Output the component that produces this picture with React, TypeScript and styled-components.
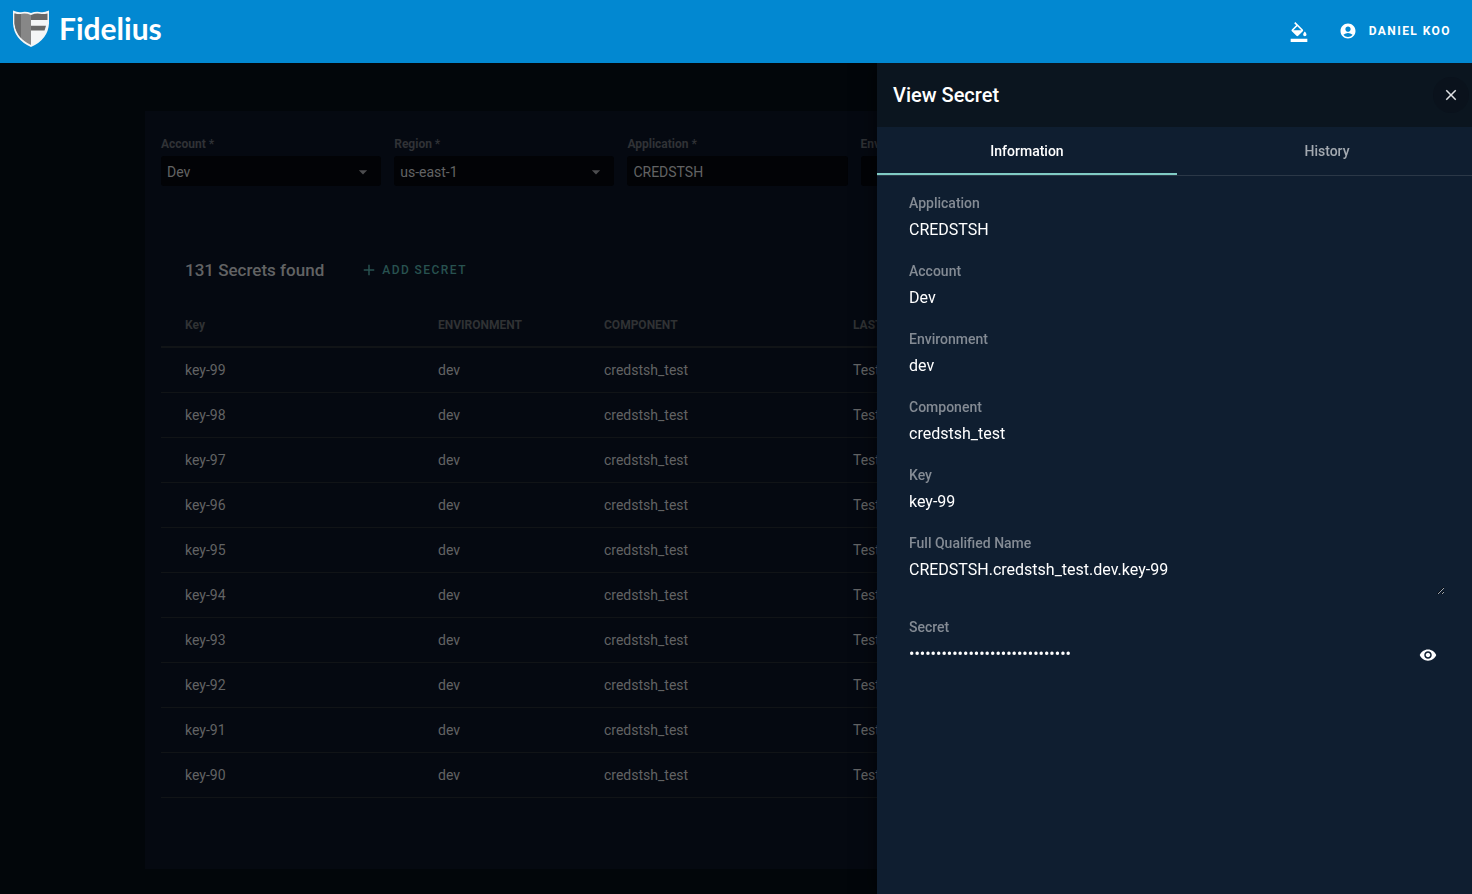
import React from "react";
import styled, { createGlobalStyle } from "styled-components";
import {
  MdAccountCircle,
  MdAdd,
  MdArrowDropDown,
  MdClose,
  MdFormatColorFill,
  MdVisibility,
} from "react-icons/md";

const GlobalStyle = createGlobalStyle`
  * { box-sizing: border-box; }
  body {
    margin: 0;
    background: #02060a;
    color: #626364;
    font-family: Roboto, "Liberation Sans", sans-serif;
    font-size: 14px;
    overflow: hidden;
  }
  button, input, select, textarea { font: inherit; color: inherit; border: 0; padding: 0; margin: 0; background: none; outline: 0; }
  button { cursor: pointer; }
`;

const TopBar = styled.header`
  position: relative;
  z-index: 2;
  display: flex;
  align-items: center;
  justify-content: space-between;
  height: 63px;
  padding: 0 21px 0 12px;
  background: #0288d1;
  color: #fff;
`;

const Brand = styled.a`
  display: flex;
  align-items: center;
  gap: 9px;
  height: 56px;
  align-self: flex-start;
  color: inherit;
  text-decoration: none;
  font: 700 30px/36px Lato, sans-serif;
`;

const TopActions = styled.div`
  display: flex;
  align-items: center;
  gap: 30px;
`;

const ThemeButton = styled.button`
  display: flex;
  font-size: 20px;
`;

const UserButton = styled.button`
  display: flex;
  align-items: center;
  gap: 12px;
  padding-bottom: 2px;
  font-size: 12px;
  font-weight: 700;
  line-height: 20px;
  letter-spacing: 0.12em;
  text-transform: uppercase;

  svg { font-size: 18px; }
`;

const Card = styled.main`
  min-height: 758px;
  margin: 48px 142px 0 145px;
  padding: 25px 16px 0;
  background: #050911;
`;

const Filters = styled.form`
  display: grid;
  grid-template-columns: repeat(5, 1fr);
  gap: 13px;
`;

const Filter = styled.label`
  display: grid;
  gap: 4px;
  color: #303236;
  font-size: 12px;
  font-weight: 700;
  line-height: 16px;
`;

const FilterBox = styled.span`
  display: flex;
  align-items: center;
  height: 30px;
  padding: 2px 8px 0 6px;
  border-radius: 3px;
  background: #020306;
  color: #626364;
  font-size: 14px;
  font-weight: 400;

  select, input { flex: 1; min-width: 0; appearance: none; line-height: 20px; }
  svg { flex: none; font-size: 20px; color: #4c4d4f; }
`;

const ListHeader = styled.div`
  display: flex;
  align-items: center;
  gap: 36px;
  margin-top: 66px;
  padding-left: 24px;
  height: 36px;
`;

const ListTitle = styled.h2`
  margin: 0;
  font-size: 17px;
  font-weight: 500;
  line-height: 24px;
`;

const AddButton = styled.button`
  display: flex;
  align-items: center;
  gap: 4px;
  color: #285250;
  font-size: 12px;
  font-weight: 500;
  line-height: 20px;
  letter-spacing: 0.12em;
  text-transform: uppercase;

  svg { font-size: 18px; }
`;

const SecretsTable = styled.table`
  width: 100%;
  margin-top: 14px;
  border-collapse: separate;
  border-spacing: 0;
  table-layout: fixed;

  th, td { padding: 0; text-align: left; white-space: nowrap; }
  th {
    height: 46px;
    padding-top: 2px;
    border-bottom: 2px solid #111417;
    color: #303234;
    font-size: 12px;
    font-weight: 700;
  }
  td { height: 45px; border-bottom: 1px solid #111417; }
  th:first-child, td:first-child { padding-left: 24px; }
`;

const Column = styled.col<{ $width?: number }>`
  width: ${(p) => (p.$width ? `${p.$width}px` : "auto")};
`;

/* The sheet is 600px wide and rests slightly past the window's right edge. */
const Sheet = styled.aside`
  position: fixed;
  z-index: 1;
  top: 63px;
  right: -5px;
  bottom: 0;
  width: 600px;
  background: #0f1e30;
  color: #fff;
  box-shadow: 0 0 20px rgba(0, 0, 0, 0.6);
`;

const SheetHeader = styled.div`
  display: flex;
  align-items: center;
  justify-content: space-between;
  height: 64px;
  padding: 0 8px 0 16px;
  background: #0b151f;
`;

const SheetTitle = styled.h1`
  margin: 0;
  font-size: 20px;
  font-weight: 500;
  line-height: 28px;
`;

const CloseButton = styled.button`
  display: flex;
  align-items: center;
  justify-content: center;
  width: 36px;
  height: 36px;
  border-radius: 50%;
  background: #0a121c;
  color: #e0e2e4;
  font-size: 18px;
`;

const Tabs = styled.div`
  display: flex;
  height: 49px;
  border-bottom: 1px solid #2b3847;
`;

const Tab = styled.button<{ $active?: boolean }>`
  flex: 1;
  border-top: 2px solid transparent;
  border-bottom: 2px solid ${(p) => (p.$active ? "#80cbc4" : "transparent")};
  color: ${(p) => (p.$active ? "#fff" : "#a3a9b0")};
  font-size: 14px;
  font-weight: 500;
`;

const Details = styled.div`
  display: grid;
  gap: 19px;
  padding: 17px 32px 0;
`;

const Field = styled.label`
  display: grid;
  grid-template-columns: 1fr auto;
  row-gap: 5px;
  font-size: 16px;
  line-height: 24px;

  input { height: 24px; min-width: 0; }
  textarea { grid-column: 1 / -1; height: 37px; min-height: 37px; margin-bottom: 3px; resize: both; }
`;

const FieldName = styled.span`
  grid-column: 1 / -1;
  color: #848b94;
  font-size: 14px;
  font-weight: 500;
  line-height: 20px;
`;

const RevealButton = styled.button`
  display: flex;
  align-items: center;
  padding: 2px 8px 0 0;
  font-size: 18px;
`;

const Shield = () => (
  <svg width="38" height="40" viewBox="0 -1.5 38 40" aria-hidden="true">
    <path d="M1 1Q6 3.300 9 2.700Q14 1.600 19 3.500Q24 1.600 29 2.700Q32 3.300 37 1V14Q36 30 19 37.500Q2 30 1 14Z" fill="#f4f6f7" />
    <path d="M2.500 4Q7 5 10 4.300Q14 3.500 19 5.500V35.500Q4 28.500 2.500 14Z" fill="#878787" />
    <path d="M2.500 4Q6 5 9 4.500V28.500Q3.500 22.500 2.500 14Z" fill="#696969" />
    <path d="M19 5.500Q24 3.500 28 4.300Q31 5 35.500 4V10.500H19Z" fill="#686868" />
    <path d="M19 16.300H34L32.500 21H19Z" fill="#686868" />
  </svg>
);

const keys = [99, 98, 97, 96, 95, 94, 93, 92, 91, 90];

const details = [
  ["Application", "CREDSTSH"],
  ["Account", "Dev"],
  ["Environment", "dev"],
  ["Component", "credstsh_test"],
  ["Key", "key-99"],
];

const SelectFilter = ({ name, value }: { name: string; value: string }) => (
  <Filter>
    {name} *
    <FilterBox>
      <select defaultValue={value}>
        <option>{value}</option>
      </select>
      <MdArrowDropDown />
    </FilterBox>
  </Filter>
);

const InputFilter = ({ name, value }: { name: string; value?: string }) => (
  <Filter>
    {name}
    <FilterBox>
      <input type="text" defaultValue={value} />
    </FilterBox>
  </Filter>
);

export default function App() {
  return (
    <>
      <GlobalStyle />
      <TopBar>
        <Brand href="#">
          <Shield />
          Fidelius
        </Brand>
        <TopActions>
          <ThemeButton type="button" aria-label="Change theme">
            <MdFormatColorFill />
          </ThemeButton>
          <UserButton type="button">
            <MdAccountCircle />
            Daniel Koo
          </UserButton>
        </TopActions>
      </TopBar>

      <Card>
        <Filters>
          <SelectFilter name="Account" value="Dev" />
          <SelectFilter name="Region" value="us-east-1" />
          <InputFilter name="Application *" value="CREDSTSH" />
          <InputFilter name="Environment" />
        </Filters>
        <ListHeader>
          <ListTitle>131 Secrets found</ListTitle>
          <AddButton type="button">
            <MdAdd />
            Add Secret
          </AddButton>
        </ListHeader>
        <SecretsTable>
          <colgroup>
            <Column $width={277} />
            <Column $width={166} />
            <Column $width={249} />
            <Column />
          </colgroup>
          <thead>
            <tr>
              <th>Key</th>
              <th>ENVIRONMENT</th>
              <th>COMPONENT</th>
              <th>LAST UPDATED BY</th>
            </tr>
          </thead>
          <tbody>
            {keys.map((n) => (
              <tr key={n}>
                <td>key-{n}</td>
                <td>dev</td>
                <td>credstsh_test</td>
                <td>Test</td>
              </tr>
            ))}
          </tbody>
        </SecretsTable>
      </Card>

      <Sheet>
        <SheetHeader>
          <SheetTitle>View Secret</SheetTitle>
          <CloseButton type="button" aria-label="Close">
            <MdClose />
          </CloseButton>
        </SheetHeader>
        <Tabs role="tablist">
          <Tab type="button" role="tab" aria-selected="true" $active>
            Information
          </Tab>
          <Tab type="button" role="tab" aria-selected="false">
            History
          </Tab>
        </Tabs>
        <Details>
          {details.map(([name, value]) => (
            <Field key={name}>
              <FieldName>{name}</FieldName>
              <input type="text" readOnly value={value} />
            </Field>
          ))}
          <Field>
            <FieldName>Full Qualified Name</FieldName>
            <textarea readOnly value="CREDSTSH.credstsh_test.dev.key-99" />
          </Field>
          <Field>
            <FieldName>Secret</FieldName>
            <input type="password" readOnly value={"x".repeat(30)} />
            <RevealButton type="button" aria-label="Show secret">
              <MdVisibility />
            </RevealButton>
          </Field>
        </Details>
      </Sheet>
    </>
  );
}
